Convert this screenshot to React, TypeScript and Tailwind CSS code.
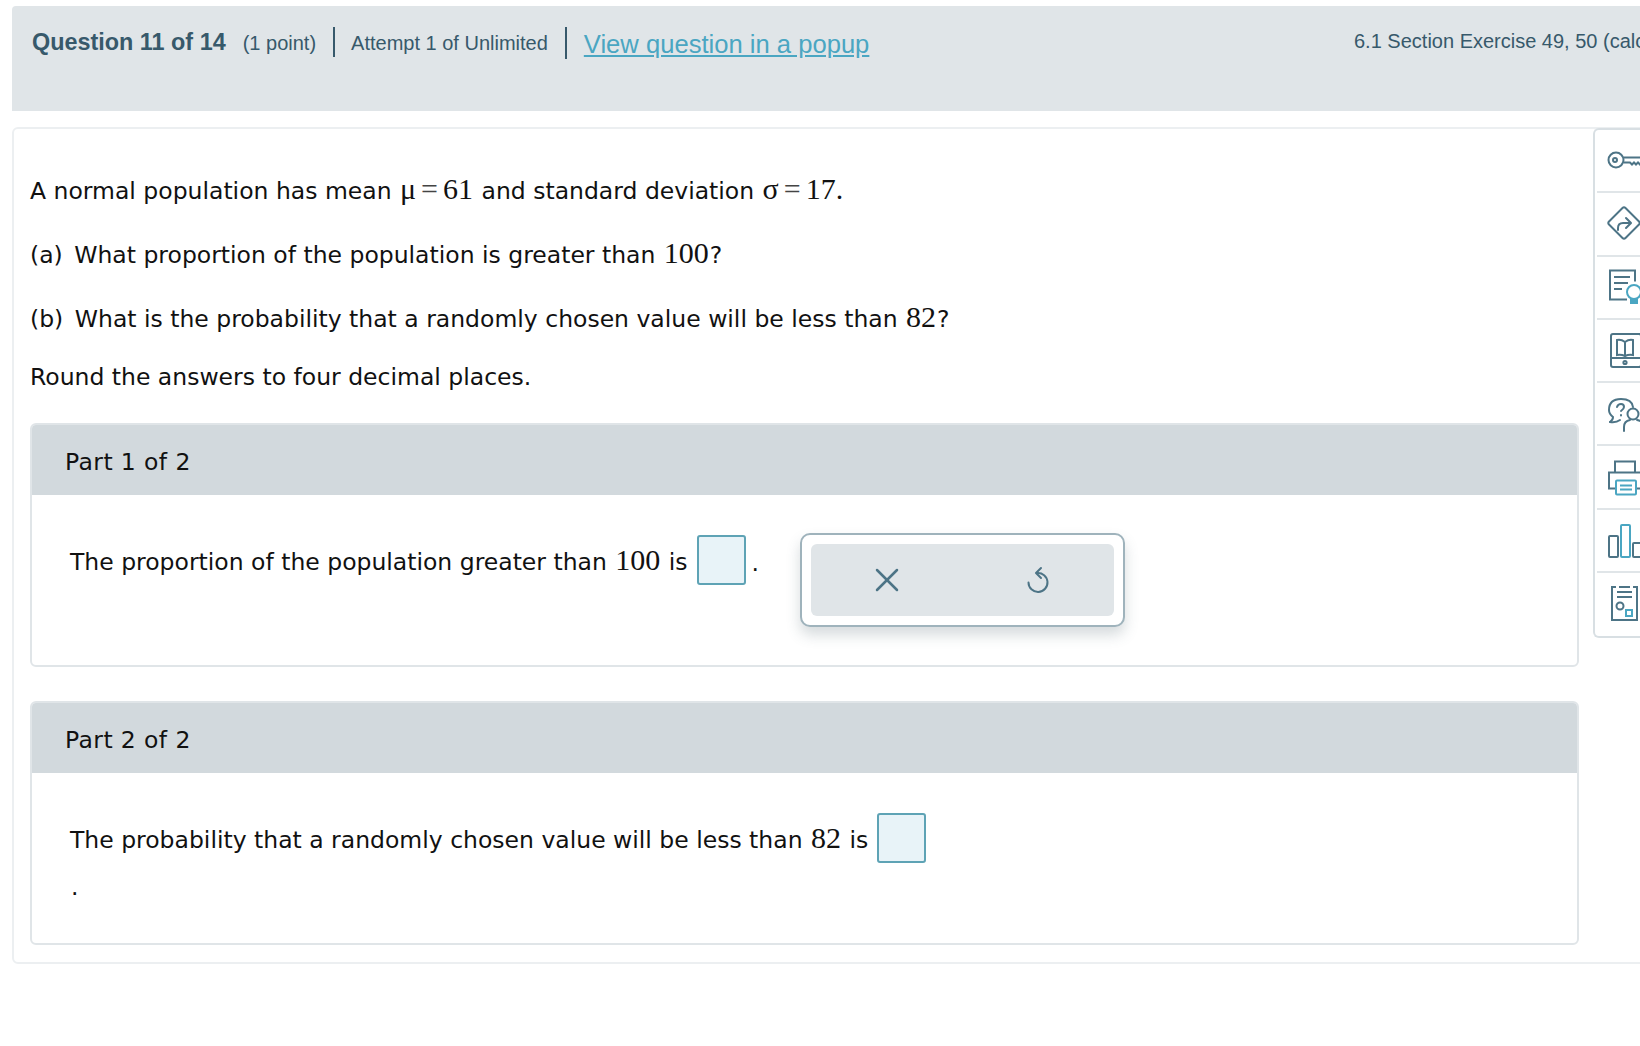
import { X } from 'lucide-react';
import type { ReactNode } from 'react';

function N({ children }: { children: ReactNode }) {
  return <span className="mx-[1px] font-['Liberation_Serif',serif] text-[30px] leading-none tracking-normal">{children}</span>;
}

function Eq({ sym, value }: { sym: string; value: string }) {
  return (
    <N>
      {sym}
      <span className="mx-[5px] text-[#444]">=</span>
      {value}
    </N>
  );
}

function AnswerBox() {
  return <span className="inline-block w-[49px] h-[50px] bg-[#e8f3f8] border-2 border-[#5ea3b5] rounded-[3px] shrink-0" />;
}

function Part({ title, children }: { title: string; children: ReactNode }) {
  return (
    <section className="w-[1549px] h-[244px] border-2 border-[#e0e5e8] rounded-[6px]">
      <div className="h-[70px] bg-[#d2d9dd] rounded-t-[4px] flex items-center pl-[33px] pt-[5px] text-[#111] tracking-[0.4px]">
        {title}
      </div>
      {children}
    </section>
  );
}

const toolStroke = '#4d7486';
const toolAccent = '#4aa6c2';

const tools: ReactNode[] = [
  <g key="key" fill="none" stroke={toolStroke} strokeWidth="2">
    <circle cx="9" cy="20" r="7.5" />
    <circle cx="8" cy="20" r="2" />
    <path d="M17 17.500h24M17 22.500h6l2 2 2-2 2 2 2-2 2 2 2-2h6" />
  </g>,
  <g key="turn" fill="none" stroke={toolStroke} strokeWidth="2" strokeLinejoin="round" strokeLinecap="round">
    <path d="M2 18.500 15.500 5q1.500-1.500 3 0L32 18.500q1.500 1.500 0 3L18.500 35q-1.500 1.500-3 0L2 21.500q-1.500-1.500 0-3Z" />
    <path d="M11 27v-2q0-5 5-5h7M19 15l5 5-5 5" />
  </g>,
  <g key="hint" fill="none" strokeWidth="2">
    <path d="M20 33.500H3V4.500h25v11" stroke={toolStroke} />
    <path d="M7 11h16M7 17h14M7 23h8" stroke={toolStroke} />
    <circle cx="27" cy="26" r="7" stroke={toolAccent} />
    <path d="M24 34h6v3h-6Z" fill={toolAccent} stroke={toolAccent} />
  </g>,
  <g key="book" fill="none" stroke={toolStroke} strokeWidth="2">
    <rect x="4" y="5" width="30" height="33" rx="2" />
    <path d="M4 29h30M10 11q4-1 8 2 4-3 8-2v15q-4-1-8 1-4-2-8-1ZM18 13v14" />
    <circle cx="18" cy="33.500" r="1.600" />
  </g>,
  <g key="help" fill="none" stroke={toolStroke} strokeWidth="2" strokeLinecap="round">
    <path d="M3 29q3-2 3-5-4-3-4-7Q2 6 14 6q11 0 12 8" />
    <path d="M3 29q6 1 10-2" />
    <path d="M10 14q1-3 4-3 3 0 3 3 0 2-3 4M14 22v.5" />
    <circle cx="26" cy="21" r="5.500" />
    <path d="M17 38v-4q0-6 6-7M30 27q6 1 7 6" />
  </g>,
  <g key="print" fill="none" strokeWidth="2">
    <path d="M8 16V5.500h20V16" stroke={toolStroke} />
    <path d="M8 32.500H2V16.500h40v16h-12" stroke={toolStroke} />
    <rect x="9" y="24.500" width="20" height="14" rx="1" stroke={toolAccent} />
    <path d="M13 29.500h12M13 33.500h12" stroke={toolAccent} />
  </g>,
  <g key="bars" fill="none" strokeWidth="2">
    <rect x="2" y="17" width="9" height="21" rx="1" stroke={toolStroke} />
    <rect x="14" y="6" width="9" height="32" rx="1" stroke={toolAccent} />
    <rect x="26" y="24" width="9" height="14" rx="1" stroke={toolStroke} />
  </g>,
  <g key="report" fill="none" strokeWidth="2">
    <path d="M9 4H5v33h25V4h-4" stroke={toolStroke} />
    <path d="M12 4h11M10 9h15M10 14h15" stroke={toolStroke} />
    <circle cx="13" cy="23" r="3.500" stroke={toolStroke} />
    <rect x="19" y="27" width="6" height="6" stroke={toolAccent} />
  </g>,
];

function Toolbar() {
  return (
    <aside className="w-[60px] h-[510px] -mt-[1px] shrink-0 border-2 border-r-0 border-[#d8dfe3] bg-white rounded-l-[6px] flex flex-col pl-[2px]">
      {tools.map((icon, i) => (
        <div key={i} className={`h-[63.6px] flex items-center pl-[10px] ${i < tools.length - 1 ? 'border-b-2 border-[#e0e5e8]' : ''}`}>
          <svg width="48" height="42" viewBox="0 0 48 42" className="shrink-0">{icon}</svg>
        </div>
      ))}
    </aside>
  );
}

export default function App() {
  return (
    <div className="w-[1640px] h-[1046px] overflow-hidden bg-white pt-[6px] pl-[12px] font-['DejaVu_Sans',sans-serif]">
      <header className="w-[1628px] h-[105px] bg-[#e0e5e8] rounded-tl-[4px] flex items-start pt-[21px] pl-[19px] text-[#37596b] font-['Liberation_Sans',Arial,sans-serif]">
        <h1 className="text-[23.4px] font-bold leading-[30px] whitespace-nowrap pl-[1px]">Question 11 of 14</h1>
        <span className="ml-[17px] text-[20px] leading-[33px] whitespace-nowrap">(1 point)</span>
        <span className="ml-[17px] w-[2px] h-[30px] bg-[#37596b]" />
        <span className="ml-[16px] text-[20px] leading-[33px] whitespace-nowrap">Attempt 1 of Unlimited</span>
        <span className="ml-[17px] w-[2px] h-[32px] bg-[#37596b]" />
        <a href="#" className="ml-[17px] text-[25.6px] leading-[34px] text-[#4aa6c2] underline whitespace-nowrap">View question in a popup</a>
        <span className="ml-auto w-[286px] shrink-0 text-[20px] leading-[28px] whitespace-nowrap">6.1 Section Exercise 49, 50 (calc</span>
      </header>

      <main className="mt-[16px] w-[1700px] h-[837px] border-2 border-[#eceff1] rounded-l-[6px] flex text-[23.500px] text-[#111]">
        <div className="w-[1579px] shrink-0 pl-[16px]">
          <p className="mt-[44px] leading-[36px]">A normal population has mean <Eq sym="μ" value="61" /> and standard deviation <Eq sym="σ" value="17." /></p>
          <p className="mt-[28px] leading-[36px]">(a)<span className="ml-[4px]"> </span> What proportion of the population is greater than <N>100</N>?</p>
          <p className="mt-[28px] leading-[36px]">(b)<span className="ml-[4px]"> </span> What is the probability that a randomly chosen value will be less than <N>82</N>?</p>
          <p className="mt-[22px] leading-[36px]">Round the answers to four decimal places.</p>

          <div className="mt-[28px] flex flex-col gap-[34px]">
            <Part title="Part 1 of 2">
              <div className="pl-[38px] pt-[40px] flex items-start">
                <span className="leading-[54px] whitespace-nowrap">The proportion of the population greater than <N>100</N> is</span>
                <span className="ml-[9px]"><AnswerBox /></span>
                <span className="ml-[6px] leading-[56px]">.</span>
                <div className="ml-[41px] w-[325px] h-[94px] p-[9px] -mt-[2px] bg-white border-2 border-[#9fb3bc] rounded-[10px] shadow-[0_8px_14px_rgba(70,90,100,0.22)]">
                  <div className="h-full bg-[#e0e5e8] rounded-[6px] grid grid-cols-2 place-items-center text-[#4d7486]">
                    <X size={40} strokeWidth={1.5} />
                    <svg width="24" height="28" viewBox="0 0 24 28" fill="none" stroke="currentColor" strokeWidth="2" strokeLinecap="round" strokeLinejoin="round">
                      <path d="M11 7A9.500 9.500 0 1 1 2.500 16.500" />
                      <path d="M15 2l-5 5 5 5" />
                    </svg>
                  </div>
                </div>
              </div>
            </Part>
            <Part title="Part 2 of 2">
              <div className="pl-[38px] pt-[40px]">
                <div className="flex items-start">
                  <span className="leading-[54px] whitespace-nowrap">The probability that a randomly chosen value will be less than <N>82</N> is</span>
                  <span className="ml-[9px]"><AnswerBox /></span>
                </div>
                <p className="leading-[36px] -mt-[4px] pl-[1px]">.</p>
              </div>
            </Part>
          </div>
        </div>
        <Toolbar />
      </main>
    </div>
  );
}
